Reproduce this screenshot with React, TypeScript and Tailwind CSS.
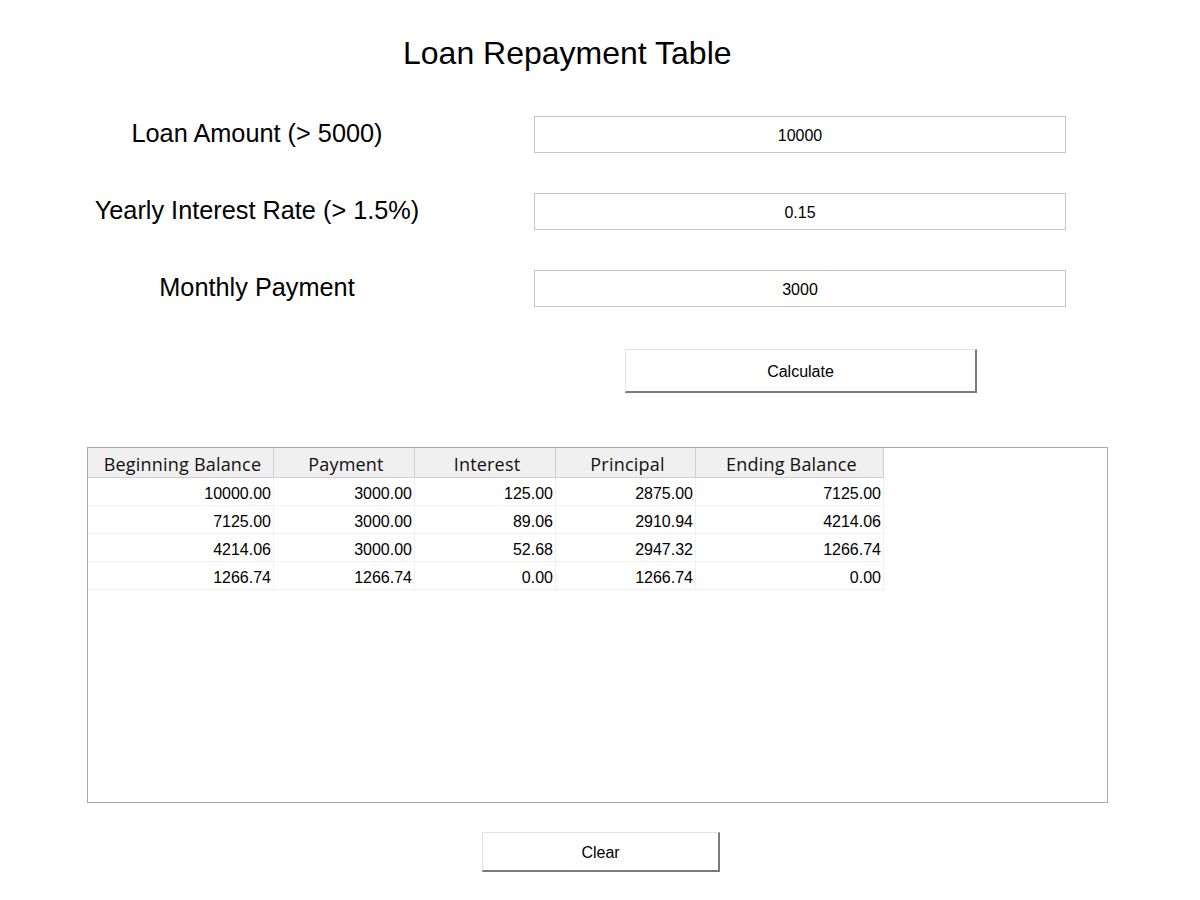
import React from 'react';

const COLS = [
  { title: 'Beginning Balance', w: 'w-[186px]' },
  { title: 'Payment', w: 'w-[141px]' },
  { title: 'Interest', w: 'w-[141px]' },
  { title: 'Principal', w: 'w-[140px]' },
  { title: 'Ending Balance', w: 'w-[188px]' },
];

const ROWS = [
  ['10000.00', '3000.00', '125.00', '2875.00', '7125.00'],
  ['7125.00', '3000.00', '89.06', '2910.94', '4214.06'],
  ['4214.06', '3000.00', '52.68', '2947.32', '1266.74'],
  ['1266.74', '1266.74', '0.00', '1266.74', '0.00'],
];

const FIELDS = [
  { label: 'Loan Amount (> 5000)', value: '10000' },
  { label: 'Yearly Interest Rate (> 1.5%)', value: '0.15' },
  { label: 'Monthly Payment', value: '3000' },
];

export default function App() {
  return (
    <div className="w-[1200px] h-[900px] bg-white text-black font-['Liberation_Sans',Arial,sans-serif] overflow-hidden">
      <h1 className="pt-[35px] pl-[403px] text-[32px] leading-[37px]">Loan Repayment Table</h1>

      <div className="mt-[44px] flex flex-col gap-[40px]">
        {FIELDS.map(f => (
          <div key={f.label} className="flex items-center h-[37px]">
            <div className="w-[514px] text-center text-[25.3px] leading-[30px] -mt-[3px]">{f.label}</div>
            <input readOnly value={f.value}
              className="ml-[20px] w-[532px] h-[37px] pt-[2px] border border-[#c6c6c6] bg-white text-center text-[16px] outline-none" />
          </div>
        ))}
      </div>

      <div className="mt-[42px] pl-[625px]">
        <button className="w-[352px] h-[44px] pt-[3px] bg-white border border-[#e2e2e2] border-b-2 border-r-2 border-b-[#7c7c7c] border-r-[#7c7c7c] text-[16px]">
          Calculate
        </button>
      </div>

      <div className="mt-[54px] ml-[87px] w-[1021px] h-[356px] border border-[#a8a8a8]">
        <div className="flex">
          {COLS.map(c => (
            <div key={c.title}
              className={`${c.w} h-[30px] pt-[3px] pl-[4px] bg-[#f0f0f0] border-b border-r border-[#cfcfcf] flex items-center justify-center font-['Open_Sans',sans-serif] text-[18px] tracking-[0.2px] text-[#111]`}>
              {c.title}
            </div>
          ))}
        </div>
        {ROWS.map((r, ri) => (
          <div key={ri} className="flex">
            {r.map((v, ci) => (
              <div key={ci}
                className={`${COLS[ci].w} h-[28px] pt-[5px] border-b border-r border-[#f0f0f0] flex items-center justify-end pr-[2px] text-[16px]`}>
                {v}
              </div>
            ))}
          </div>
        ))}
      </div>

      <div className="mt-[29px] pl-[482px]">
        <button className="w-[238px] h-[40px] pt-[2px] bg-white border border-[#e2e2e2] border-b-2 border-r-2 border-b-[#7c7c7c] border-r-[#7c7c7c] text-[16px]">
          Clear
        </button>
      </div>
    </div>
  );
}
